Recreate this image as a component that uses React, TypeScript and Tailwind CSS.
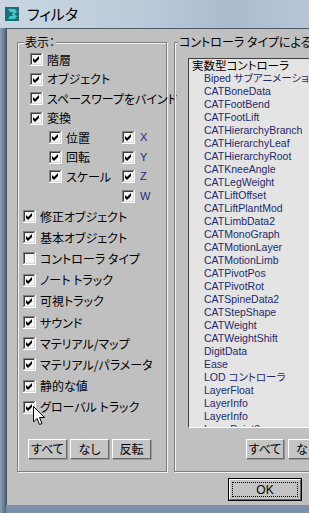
import React from "react";

const jp = "font-['Noto_Sans_CJK_JP',sans-serif] [font-feature-settings:'palt']";
const lat = "font-['Liberation_Sans','Noto_Sans_CJK_JP',sans-serif] [font-feature-settings:'palt']";
const groupBox = "relative border border-[#7e7e7e] shadow-[1px_1px_0_#f2f2f2,inset_1px_1px_0_#f2f2f2]";

const Box = ({ checked = true }: { checked?: boolean }) => (
  <svg width="13" height="13" viewBox="0 0 13 13" className="shrink-0">
    <rect x="0" y="0" width="13" height="13" fill="#ffffff" />
    <rect x="0" y="0" width="12" height="12" fill="#808080" />
    <rect x="1" y="1" width="11" height="11" fill="#d8d8d8" />
    <rect x="1" y="1" width="10" height="10" fill="#3c3c3c" />
    <rect x="2" y="2" width="9" height="9" fill="#f4f4f4" />
    {checked && <path d="M3 5 L5 7 L9 3 L9 6 L5 10 L3 8 Z" fill="#000" />}
  </svg>
);

const Check = ({ label, checked = true, h = "h-[19.5px]", ml }: { label: string; checked?: boolean; h?: string; ml: string }) => (
  <div className={`flex items-center ${h} ${ml}`}>
    <Box checked={checked} />
    <span className={`ml-[4px] text-[12px] leading-none whitespace-nowrap text-black ${jp}`}>{label}</span>
  </div>
);

const XYZ = ({ label }: { label: string }) => (
  <div className="flex items-center h-[19.5px]">
    <Box />
    <span className={`ml-[5px] text-[11px] leading-none text-[#1f2a80] ${lat}`}>{label}</span>
  </div>
);

const Btn = ({ label, w = "w-[39px]" }: { label: string; w?: string }) => (
  <div
    className={`${w} h-[20px] shrink-0 flex items-center justify-center bg-[#c4c4c4] border border-t-white border-l-white border-b-[#6a6a6a] border-r-[#6a6a6a] shadow-[1px_1px_0_#9a9a9a] text-[12px] text-black ${jp}`}
  >
    {label}
  </div>
);

const listItems = [
  "Biped サブアニメーション",
  "CATBoneData",
  "CATFootBend",
  "CATFootLift",
  "CATHierarchyBranch",
  "CATHierarchyLeaf",
  "CATHierarchyRoot",
  "CATKneeAngle",
  "CATLegWeight",
  "CATLiftOffset",
  "CATLiftPlantMod",
  "CATLimbData2",
  "CATMonoGraph",
  "CATMotionLayer",
  "CATMotionLimb",
  "CATPivotPos",
  "CATPivotRot",
  "CATSpineData2",
  "CATStepShape",
  "CATWeight",
  "CATWeightShift",
  "DigitData",
  "Ease",
  "LOD コントローラ",
  "LayerFloat",
  "LayerInfo",
  "LayerInfo",
  "LayerPoint3",
];

const App = () => {
  return (
    <div className="w-[309px] h-[513px] overflow-hidden bg-[#7b90a8] flex flex-col relative select-none">
      {/* title bar */}
      <div className="h-[28px] shrink-0 flex items-center pl-[5px] bg-[linear-gradient(90deg,#c9d6e2_0%,#bccbda_45%,#a9bbcd_75%,#b8c7d6_100%)]">
        <svg width="14" height="14" viewBox="0 0 14 14">
          <rect x="0" y="0" width="14" height="14" fill="#1c6f78" />
          <path d="M3 2 H10 L12 5 L9 7 L12 9 L10 12 H3 L5 9 H8 L7 7 L8 5 H5 Z" fill="#46c6c8" />
        </svg>
        <span className={`ml-[8px] text-[15px] text-black ${jp}`}>フィルタ</span>
      </div>

      <div className="flex-1 flex min-w-0">
        <div className="w-[6px] shrink-0 bg-[linear-gradient(90deg,#8aa0b6,#6c8299_60%,#4e6175)]" />
        {/* client */}
        <div className="flex-1 min-w-0 h-[477px] overflow-hidden bg-[#c0c0c0] border-l border-t border-[#4a5868] pl-[10px] pt-[13px] flex flex-col">
          <div className="flex gap-[7px] w-[400px]">
            {/* left group */}
            <div className={`w-[150px] h-[430px] shrink-0 ${groupBox}`}>
              <span className={`absolute left-[6px] -top-[8px] px-[1px] bg-[#c0c0c0] text-[12px] leading-[14px] text-black ${jp}`}>
                表示：
              </span>
              <div className="flex flex-col pt-[7px]">
                <Check label="階層" ml="ml-[12px]" />
                <Check label="オブジェクト" ml="ml-[12px]" />
                <Check label="スペースワープをバインド" ml="ml-[12px]" />
                <Check label="変換" ml="ml-[12px]" />
                <div className="grid grid-cols-[73px_auto] ml-[31px]">
                  <Check label="位置" ml="ml-0" />
                  <XYZ label="X" />
                  <Check label="回転" ml="ml-0" />
                  <XYZ label="Y" />
                  <Check label="スケール" ml="ml-0" />
                  <XYZ label="Z" />
                  <div />
                  <XYZ label="W" />
                </div>
                <Check label="修正オブジェクト" ml="ml-[5px]" h="h-[21.2px]" />
                <Check label="基本オブジェクト" ml="ml-[5px]" h="h-[21.2px]" />
                <Check label="コントローラ タイプ" checked={false} ml="ml-[5px]" h="h-[21.2px]" />
                <Check label="ノート トラック" ml="ml-[5px]" h="h-[21.2px]" />
                <Check label="可視トラック" ml="ml-[5px]" h="h-[21.2px]" />
                <Check label="サウンド" ml="ml-[5px]" h="h-[21.2px]" />
                <Check label="マテリアル/マップ" ml="ml-[5px]" h="h-[21.2px]" />
                <Check label="マテリアル/パラメータ" ml="ml-[5px]" h="h-[21.2px]" />
                <Check label="静的な値" ml="ml-[5px]" h="h-[21.2px]" />
                <Check label="グローバル トラック" ml="ml-[5px]" h="h-[21.2px]" />
                <div className="flex gap-[3px] ml-[10px] mt-[21px]">
                  <Btn label="すべて" />
                  <Btn label="なし" />
                  <Btn label="反転" />
                </div>
              </div>
            </div>

            {/* right group */}
            <div className={`w-[230px] h-[430px] shrink-0 ${groupBox}`}>
              <span className={`absolute left-[3px] -top-[8px] px-[1px] bg-[#c0c0c0] text-[12px] leading-[14px] text-black whitespace-nowrap ${jp}`}>
                コントローラ タイプによる非表示
              </span>
              <div className="ml-[13px] mt-[15px] mr-[14px] h-[370px] overflow-hidden bg-[#e4e4e4] border border-t-[#404040] border-l-[#404040] border-b-white border-r-white">
                <div className={`text-[11.5px] leading-[13px] pl-[3px] whitespace-nowrap text-black ${jp}`}>実数型コントローラ</div>
                {listItems.map((t, i) => (
                  <div key={i} className={`text-[10.5px] leading-[13px] pl-[15px] whitespace-nowrap text-[#1f2a6b] ${lat}`}>
                    {t}
                  </div>
                ))}
              </div>
              <div className="flex gap-[4px] ml-[71px] mt-[11px]">
                <Btn label="すべて" w="w-[38px]" />
                <Btn label="なし" w="w-[38px]" />
              </div>
            </div>
          </div>

          {/* OK */}
          <div className="pl-[211px] mt-[6px]">
            <div className="w-[74px] h-[23px] border border-black bg-[#c4c4c4] flex">
              <div className="flex-1 border border-t-white border-l-white border-b-[#6a6a6a] border-r-[#6a6a6a] p-[2px] flex">
                <div className={`flex-1 border border-dotted border-black flex items-center justify-center text-[12px] text-black ${lat}`}>
                  OK
                </div>
              </div>
            </div>
          </div>
        </div>
      </div>

      {/* mouse cursor */}
      <svg className="absolute left-[33px] top-[406px]" width="13" height="21" viewBox="0 0 13 21">
        <path d="M0.5 0.5 L0.5 16 L4 12.5 L6.5 18.5 L9 17.5 L6.5 11.5 L11.5 11.5 Z" fill="#fff" stroke="#000" strokeWidth="1" />
      </svg>
    </div>
  );
};

export default App;
